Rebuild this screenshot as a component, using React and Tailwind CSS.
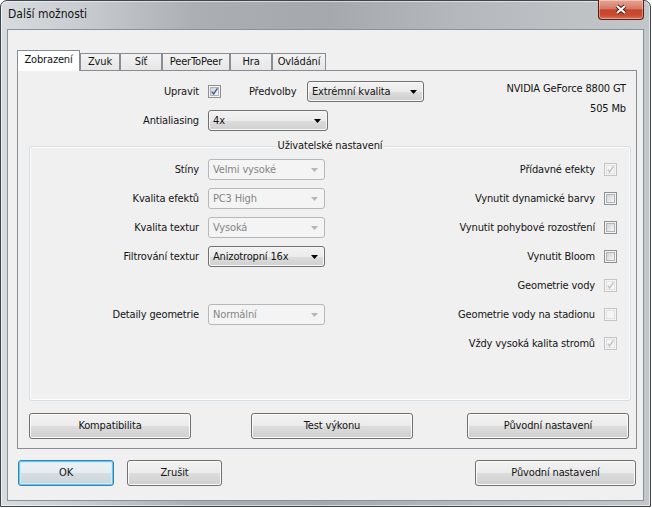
import React from 'react';

const CheckBox = ({ checked, disabled }) => (
  <span
    className={
      disabled
        ? 'relative flex h-[13px] w-[13px] shrink-0 items-center justify-center border border-[#c4c4c4] bg-[#f4f4f4]'
        : 'relative flex h-[13px] w-[13px] shrink-0 items-center justify-center border border-[#8e8f8f] bg-[#f4f4f4]'
    }
  >
    <span
      className={
        disabled
          ? 'h-[9px] w-[9px] border border-[#e2e2e2] bg-[#f6f6f6]'
          : 'h-[9px] w-[9px] border border-[#b0b3b7] bg-[linear-gradient(135deg,#cfd3d8,#f7f7f7)]'
      }
    />
    {checked && (
      <svg className="absolute left-[1px] top-[1px]" width="9" height="9" viewBox="0 0 9 9">
        <path
          d="M1.8 4.6 L3.6 7 L7.4 1.4"
          fill="none"
          stroke={disabled ? '#c2c2c2' : '#4a5f97'}
          strokeWidth="1.5"
        />
      </svg>
    )}
  </span>
);

const Arrow = ({ color }) => (
  <svg width="7" height="4" viewBox="0 0 7 4">
    <polygon points="0,0 7,0 3.5,4" fill={color} />
  </svg>
);

const Combo = ({ value, className, disabled }) => (
  <div
    className={`flex h-[21px] items-center justify-between rounded-[3px] border pl-[4px] pr-[6px] ${className} ${
      disabled
        ? 'border-[#b4b8bb] bg-[#f4f4f4] text-[#868686]'
        : 'border-[#707070] bg-[linear-gradient(#f2f2f2_0%,#ebebeb_50%,#dddddd_51%,#cfcfcf_100%)] shadow-[inset_0_0_0_1px_#f8f8f8]'
    }`}
  >
    <span>{value}</span>
    <Arrow color={disabled ? '#b6b6b6' : '#000'} />
  </div>
);

const Button = ({ children, className, primary }) => (
  <div
    className={`flex h-[26px] items-center justify-center rounded-[3px] border ${className} ${
      primary
        ? 'border-[#3c7fb1] bg-[linear-gradient(#edf2f5_0%,#e5ebef_50%,#d6dde2_51%,#cbd4da_100%)] shadow-[inset_0_0_0_1px_#62cbf1,inset_0_0_0_2px_#c8ecfa]'
        : 'border-[#707070] bg-[linear-gradient(#f2f2f2_0%,#ebebeb_50%,#dddddd_51%,#cfcfcf_100%)] shadow-[inset_0_0_0_1px_#fbfbfb]'
    }`}
  >
    {children}
  </div>
);

const rows = [
  { label: 'Stíny', combo: 'Velmi vysoké', dis: true, right: 'Přídavné efekty', checked: true, cdis: true },
  { label: 'Kvalita efektů', combo: 'PC3 High', dis: true, right: 'Vynutit dynamické barvy' },
  { label: 'Kvalita textur', combo: 'Vysoká', dis: true, right: 'Vynutit pohybové rozostření' },
  { label: 'Filtrování textur', combo: 'Anizotropní 16x', right: 'Vynutit Bloom' },
  { right: 'Geometrie vody', checked: true, cdis: true },
  { label: 'Detaily geometrie', combo: 'Normální', dis: true, right: 'Geometrie vody na stadionu', cdis: true },
  { right: 'Vždy vysoká kalita stromů', checked: true, cdis: true },
];

const tabs = [
  { name: 'Zvuk', w: 'w-[40px]' },
  { name: 'Síť', w: 'w-[42px]' },
  { name: 'PeerToPeer', w: 'w-[68px]' },
  { name: 'Hra', w: 'w-[42px]' },
  { name: 'Ovládání', w: 'w-[54px]' },
];

export default function App() {
  return (
    <div className="h-[508px] w-[652px] bg-white font-['DejaVu_Sans_Condensed','DejaVu_Sans',sans-serif] text-[11px] leading-[14px] tracking-[-0.15px] text-[#141414] [font-stretch:condensed]">
      <div className="relative flex h-[507px] w-[651px] flex-col rounded-t-[7px] border border-[#3e444b] bg-[linear-gradient(90deg,#d9dcdf_0%,#c9ccd0_12%,#abafb3_30%,#a5a9ad_50%,#b4b8bc_70%,#c4c7ca_100%)] shadow-[inset_0_0_0_1px_rgba(255,255,255,0.55)]">
        {/* title bar */}
        <div className="flex h-[28px] items-center pb-[2px] pl-[7px] text-[12px] tracking-normal">Další možnosti</div>
        <div className="absolute right-[6px] top-[-1px] flex h-[20px] w-[46px] items-center justify-center rounded-b-[4px] border border-t-0 border-[#5a1e14] bg-[linear-gradient(#e9a594_0%,#d57a66_45%,#c5462e_52%,#c94a30_80%,#df7358_100%)] shadow-[inset_0_0_0_1px_rgba(255,255,255,0.35)]">
          <svg width="14" height="11" viewBox="0 0 14 11">
            <path d="M3 2 L11 9 M11 2 L3 9" stroke="#4b1a12" strokeWidth="4" />
            <path d="M3 2 L11 9 M11 2 L3 9" stroke="#fff" strokeWidth="2.2" />
          </svg>
        </div>

        {/* client area */}
        <div className="mx-[6px] mb-[5px] flex flex-1 flex-col border border-[#8592a0] bg-[#f0f0f0]">
          <div className="ml-[9px] mt-[20px] flex h-[20px] items-end">
            <div className="relative z-10 -mb-px flex h-[21px] w-[63px] items-center justify-center border border-b-0 border-[#898c95] bg-white pb-[2px]">
              Zobrazení
            </div>
            {tabs.map((t) => (
              <div
                key={t.name}
                className={`flex h-[17px] items-center justify-center border border-b-0 border-[#898c95] bg-[linear-gradient(#f3f3f3,#e6e6e6)] ${t.w}`}
              >
                {t.name}
              </div>
            ))}
          </div>

          <div className="ml-[9px] h-[379px] w-[620px] border border-[#898c95] bg-[#f0f0f0]">
            <div className="flex justify-between pr-[10px]">
              <div className="pt-[10px]">
                <div className="flex h-[21px] items-center">
                  <span className="w-[181px] text-right">Upravit</span>
                  <span className="ml-[9px]">
                    <CheckBox checked />
                  </span>
                  <span className="ml-[28px] w-[48px]">Předvolby</span>
                  <Combo value="Extrémní kvalita" className="ml-[10px] w-[117px]" />
                </div>
                <div className="mt-[8px] flex h-[21px] items-center">
                  <span className="w-[181px] text-right">Antialiasing</span>
                  <Combo value="4x" className="ml-[9px] w-[120px]" />
                </div>
              </div>
              <div className="pt-[8px] text-right leading-[20px]">
                <div>NVIDIA GeForce 8800 GT</div>
                <div>505 Mb</div>
              </div>
            </div>

            <div className="relative ml-[11px] mt-[15px] h-[255px] w-[602px] rounded-[3px] border border-[#d5dfe5] pt-[8px] shadow-[inset_0_0_0_1px_#fdfdfd]">
              <div className="absolute left-1/2 top-[-8px] -translate-x-1/2 bg-[#f0f0f0] px-[2px]">
                Uživatelské nastavení
              </div>
              {rows.map((r, i) => (
                <div key={i} className="flex h-[29px] items-center justify-between pr-[13px]">
                  <div className="flex items-center">
                    {r.label && (
                      <>
                        <span className="w-[169px] text-right">{r.label}</span>
                        <Combo value={r.combo} disabled={r.dis} className="ml-[9px] w-[117px]" />
                      </>
                    )}
                  </div>
                  <div className="flex items-center">
                    <span>{r.right}</span>
                    <span className="ml-[9px]">
                      <CheckBox checked={r.checked} disabled={r.cdis} />
                    </span>
                  </div>
                </div>
              ))}
            </div>

            <div className="ml-[11px] mt-[12px] flex">
              <Button className="w-[162px]">Kompatibilita</Button>
              <Button className="ml-[60px] w-[162px]">Test výkonu</Button>
              <Button className="ml-[54px] w-[162px]">Původní nastavení</Button>
            </div>
          </div>

          <div className="mt-[11px] flex">
            <Button primary className="ml-[10px] w-[96px]">OK</Button>
            <Button className="ml-[13px] w-[95px]">Zrušit</Button>
            <Button className="ml-auto mr-[7px] w-[161px]">Původní nastavení</Button>
          </div>
        </div>
      </div>
    </div>
  );
}
